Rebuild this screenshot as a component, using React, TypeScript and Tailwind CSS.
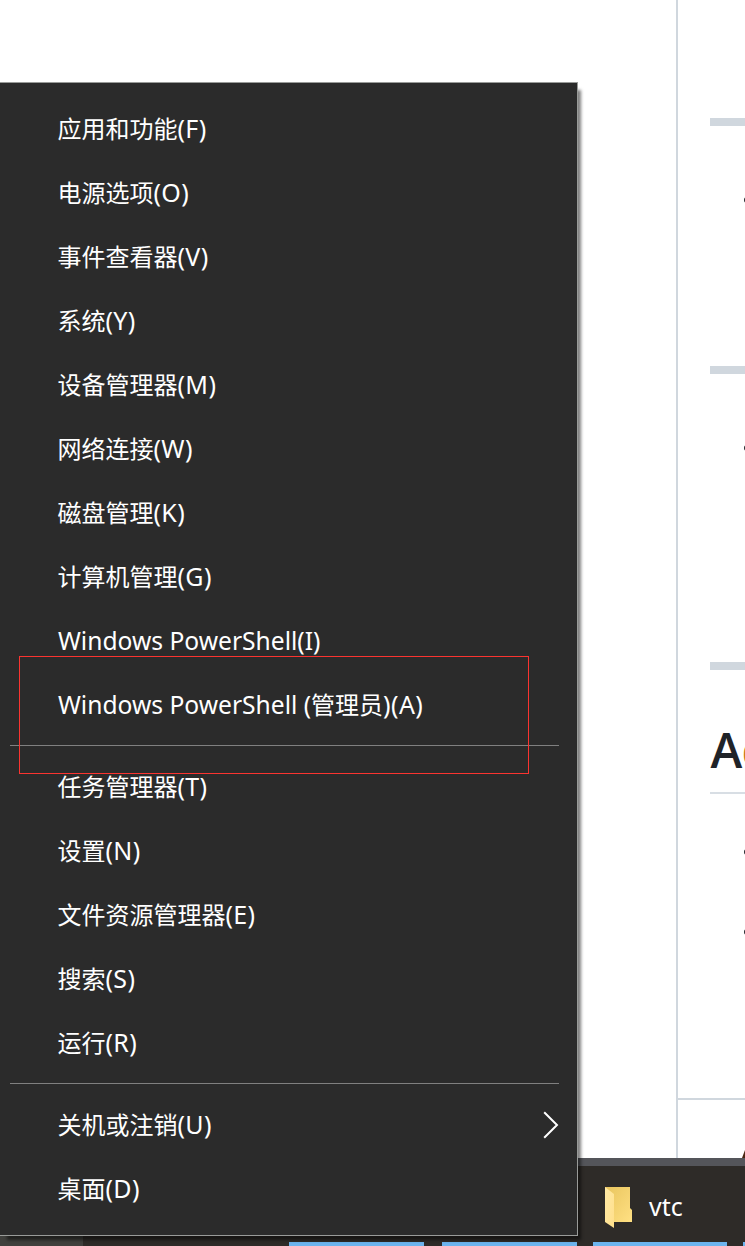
import React from "react";

type Item = { label: string; key: string; submenu?: boolean };

const groups: Item[][] = [
  [
    { label: "应用和功能", key: "(F)" },
    { label: "电源选项", key: "(O)" },
    { label: "事件查看器", key: "(V)" },
    { label: "系统", key: "(Y)" },
    { label: "设备管理器", key: "(M)" },
    { label: "网络连接", key: "(W)" },
    { label: "磁盘管理", key: "(K)" },
    { label: "计算机管理", key: "(G)" },
    { label: "Windows PowerShell", key: "(I)" },
    { label: "Windows PowerShell (管理员)", key: "(A)" },
  ],
  [
    { label: "任务管理器", key: "(T)" },
    { label: "设置", key: "(N)" },
    { label: "文件资源管理器", key: "(E)" },
    { label: "搜索", key: "(S)" },
    { label: "运行", key: "(R)" },
  ],
  [
    { label: "关机或注销", key: "(U)", submenu: true },
    { label: "桌面", key: "(D)" },
  ],
];

// Latin runs are set slightly larger than the Chinese ones.
function Label({ text }: { text: string }) {
  const runs = text.match(/[\x20-\x7e]+|[^\x20-\x7e]+/g) ?? [];
  return (
    <>
      {runs.map((run, i) =>
        /^[\x20-\x7e]/.test(run) ? (
          <span key={i} className={run.length > 5 ? "text-[24.6px]" : "text-[25px] tracking-[0.4px]"}>
            {run}
          </span>
        ) : (
          <span key={i} className={i === 0 ? "-ml-[0.6px]" : ""}>
            {run}
          </span>
        ),
      )}
    </>
  );
}

function MenuItem({ item }: { item: Item }) {
  const mixed = /[^\x20-\x7e]/.test(item.label);
  return (
    <li className="flex h-16 items-center justify-between pr-[18px] pl-[58px]">
      <span className={mixed ? "h-[34px] whitespace-pre" : "h-8 whitespace-pre"}>
        <Label text={item.label + item.key} />
      </span>
      {item.submenu && (
        <svg className="mt-[-1px] h-7 w-4" viewBox="0 0 16 28" fill="none">
          <path d="M1.2 1.2 L14 14 L1.2 26.8" stroke="#fff" strokeWidth="2" />
        </svg>
      )}
    </li>
  );
}

function ContextMenu() {
  return (
    <nav className="absolute top-[82px] left-0 h-[1154px] w-[578px] border-t border-r border-b border-[#999b99] bg-[#2b2b2b] pt-[14px] font-['Noto_Sans','Noto_Sans_CJK_SC',sans-serif] text-[24px] leading-8 text-white shadow-[5px_6px_3px_-2px_rgba(0,0,0,0.5)]">
      {groups.map((items, i) => (
        <React.Fragment key={i}>
          {i > 0 && (
            <div className="flex h-[18px] pt-2 pr-[18px] pl-[10px]">
              <div className="h-px flex-1 bg-[#808080]" />
            </div>
          )}
          <ul>
            {items.map((item) => (
              <MenuItem key={item.key} item={item} />
            ))}
          </ul>
        </React.Fragment>
      ))}
      <div className="absolute top-[573px] left-[19px] h-[118px] w-[510px] border border-[#fb3430]" />
    </nav>
  );
}

function Bullet() {
  return <div className="ml-[66px] h-[6px] w-[6px] shrink-0 rounded-full bg-[#1f2328]" />;
}

function Rule() {
  return <div className="ml-8 h-2 shrink-0 bg-[#d0d7de]" />;
}

function PageContent() {
  return (
    <main className="ml-[676px] flex h-[1158px] w-[69px] flex-col overflow-hidden border-l-2 border-[#d0d7de]">
      <div className="h-[118px] shrink-0" />
      <Rule />
      <div className="h-[71px] shrink-0" />
      <Bullet />
      <div className="h-[163px] shrink-0" />
      <Rule />
      <div className="h-[71px] shrink-0" />
      <Bullet />
      <div className="h-[211px] shrink-0" />
      <Rule />
      <h2 className="ml-8 h-[124px] w-[200px] shrink-0 border-b-2 border-[#d8dee4] pt-[48px] pl-[0.5px] font-['Open_Sans',sans-serif] text-[48px] leading-[64px] font-semibold tracking-[-0.8px] text-[#1f2328]">
        A<span className="text-[#c8781e]">c</span>
      </h2>
      <div className="h-[55px] shrink-0" />
      <Bullet />
      <div className="h-[74px] shrink-0" />
      <Bullet />
      <div className="h-[163px] shrink-0" />
      <div className="h-[2px] shrink-0 bg-[#d0d7de]" />
      <svg className="mt-[50px] ml-[64px] h-2 w-[3px] shrink-0" viewBox="0 0 3 8">
        <path d="M3 0 L0 8 H3Z" fill="#4a2611" />
      </svg>
    </main>
  );
}

function Taskbar() {
  return (
    <footer className="flex h-[88px] flex-col border-t-8 border-[#54555a] bg-[#2e2b28]">
      <div className="flex flex-1">
        <div className="h-full w-[83px] bg-[#40403d]" />
        <div className="ml-[522px] flex">
          <svg className="mt-[21px] h-[42px] w-7" viewBox="0 0 28 42">
            <defs>
              <linearGradient id="back" x1="0" x2="1" y1="0" y2="1">
                <stop offset="0" stopColor="#e9c55e" />
                <stop offset="1" stopColor="#ffe083" />
              </linearGradient>
              <linearGradient id="flap" x1="0" x2="1" y1="0" y2="1">
                <stop offset="0" stopColor="#ffe9a6" />
                <stop offset="1" stopColor="#ffdf8a" />
              </linearGradient>
            </defs>
            <path d="M0 0 H25 V21 L27 23 V35 H0Z" fill="url(#back)" />
            <path d="M0 0 L9 7 V41 L0 35Z" fill="url(#flap)" />
          </svg>
          <span className="mt-[24px] ml-4 font-['Noto_Sans',sans-serif] text-[25px] leading-8 text-white">vtc</span>
        </div>
      </div>
      <div className="-mt-1 flex h-1 shrink-0">
        <div className="ml-[289px] w-[135px] bg-[#6cb4ee]" />
        <div className="ml-[18px] w-[135px] bg-[#6cb4ee]" />
        <div className="ml-4 w-[134px] bg-[#6cb4ee]" />
        <div className="ml-4 w-[2px] bg-[#6cb4ee]" />
      </div>
    </footer>
  );
}

export default function App() {
  return (
    <div className="relative h-[1246px] w-[745px] overflow-hidden bg-white">
      <PageContent />
      <Taskbar />
      <ContextMenu />
    </div>
  );
}
